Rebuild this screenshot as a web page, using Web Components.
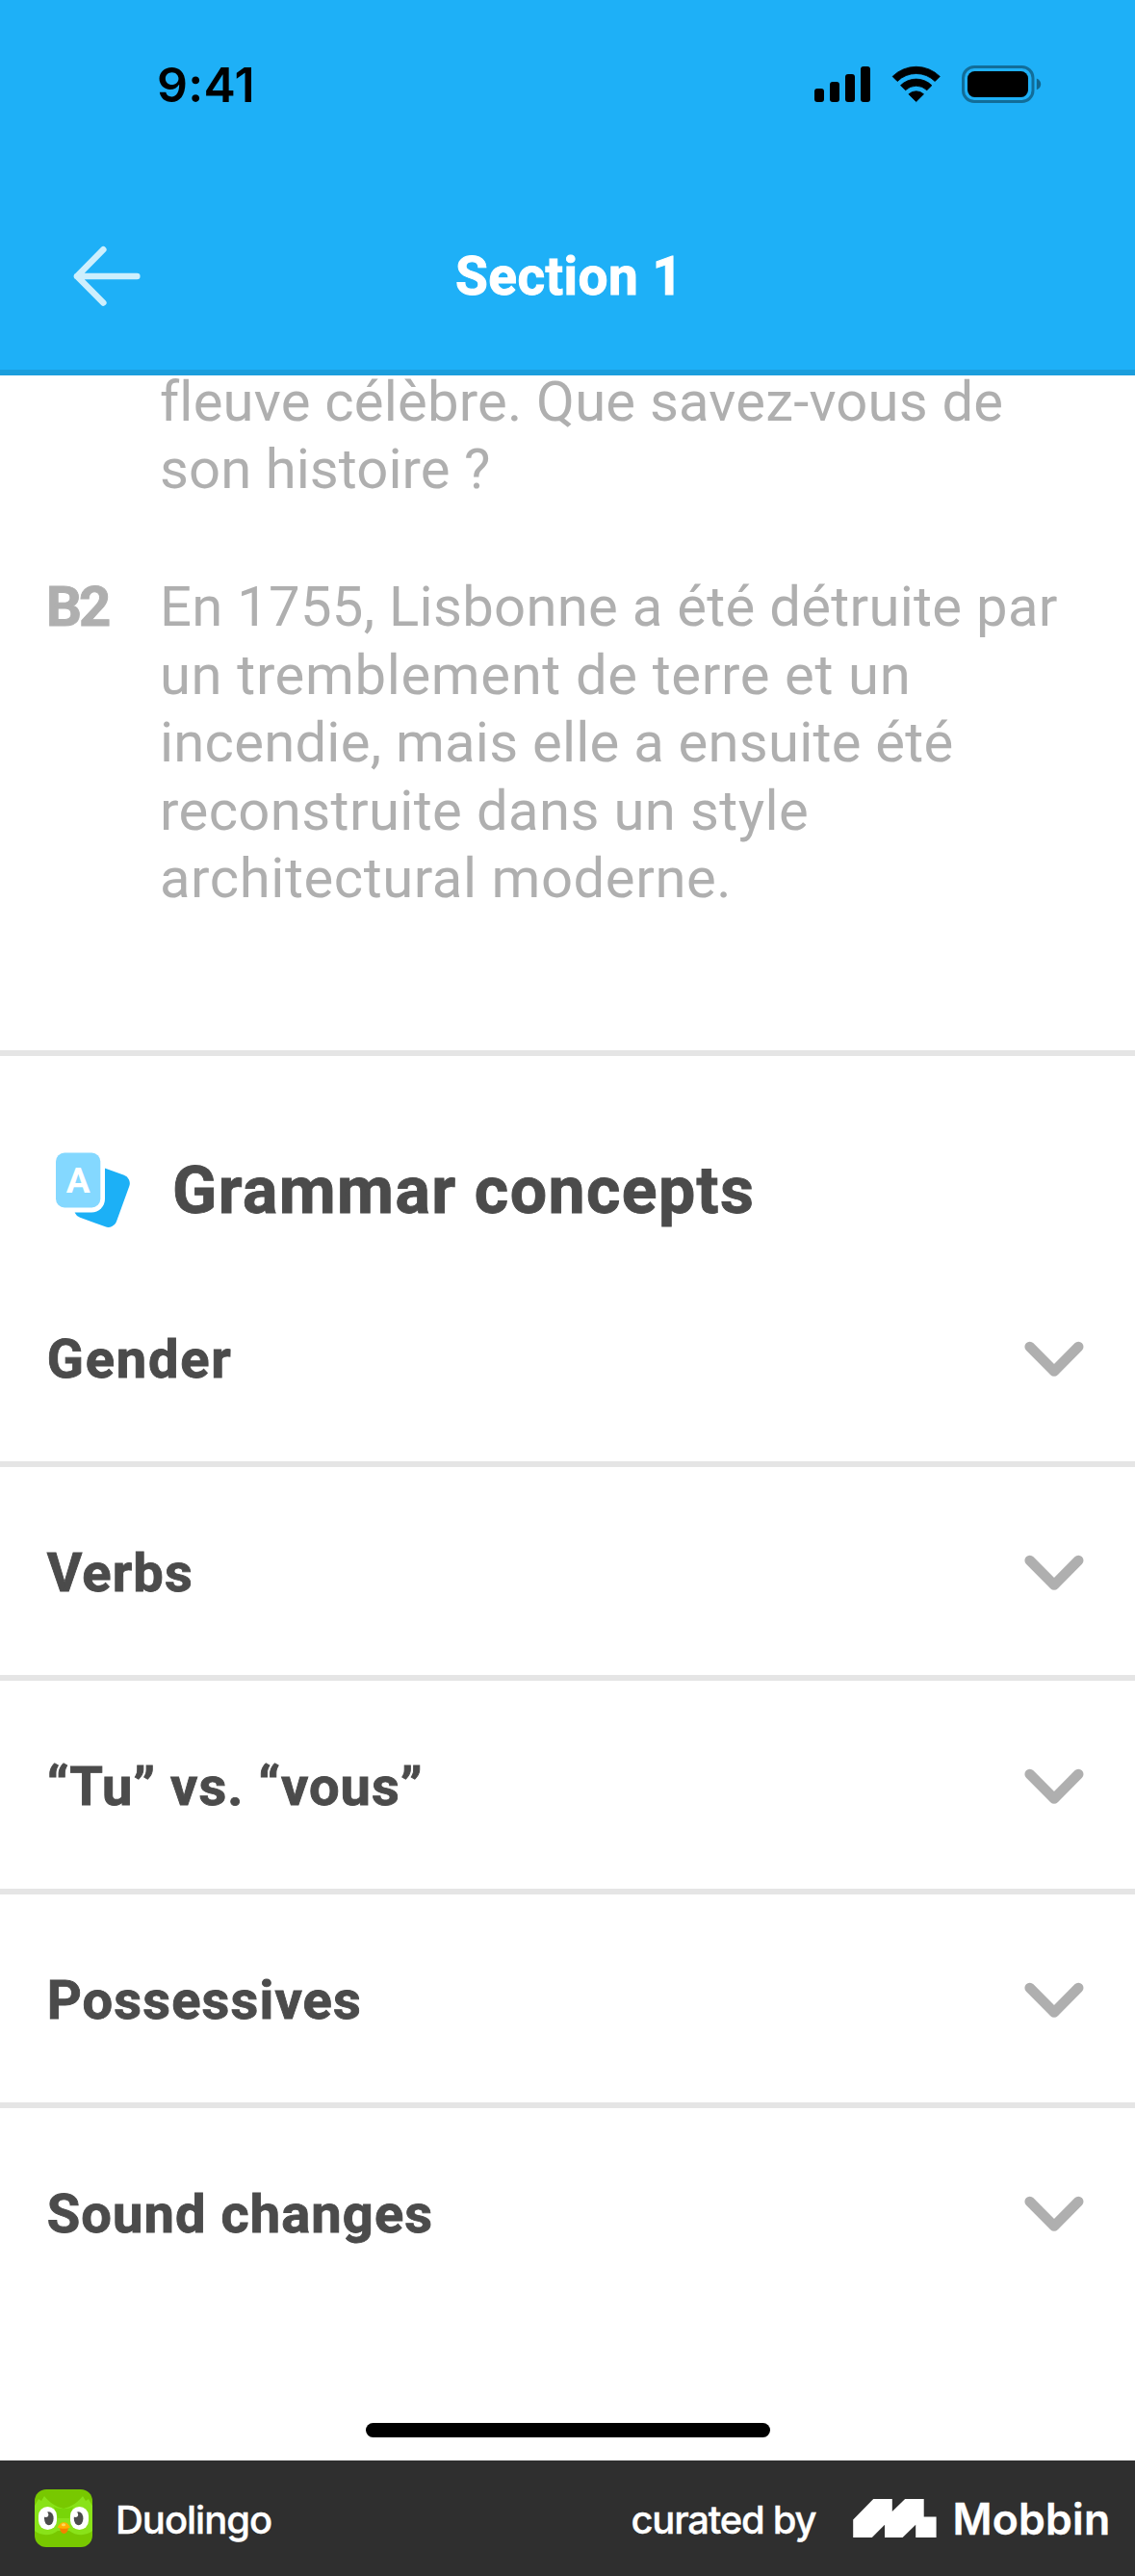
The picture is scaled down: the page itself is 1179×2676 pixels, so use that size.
<!DOCTYPE html>
<html lang="en">
<head>
<meta charset="utf-8">
<title>Section 1</title>
<style>
html,body{margin:0;padding:0;background:#fff}
body{width:1179px;height:2676px;overflow:hidden;font-family:Roboto,"Liberation Sans",sans-serif}
</style>
</head>
<body>
<guide-screen></guide-screen>
<script>
const define = (name, html, setup) => {
  const tpl = document.createElement('template');
  tpl.innerHTML = html;
  customElements.define(name, class extends HTMLElement {
    constructor() {
      super();
      this.attachShadow({ mode: 'open' }).append(tpl.content.cloneNode(true));
    }
    connectedCallback() { if (setup) setup(this); }
  });
};

define('status-bar', `
<style>
:host{display:flex;height:176px;align-items:center;justify-content:space-between;padding:0 96px 0 163px;box-sizing:border-box;color:#000;font:600 50px/60px Inter,sans-serif}
svg{display:block}
</style>
<fit-line width="98.5">9:41</fit-line>
<svg width="237" height="40" viewBox="846 68 237 40">
  <rect x="846" y="92" width="10" height="14" rx="3"/>
  <rect x="862" y="85" width="10" height="21" rx="3"/>
  <rect x="878" y="77" width="10" height="29" rx="3"/>
  <rect x="894" y="69" width="10" height="37" rx="3"/>
  <g stroke="#000" stroke-width=".8" stroke-linejoin="round">
    <path d="M927.1 79.4A35 35 0 0 1 976.3 79.4L971.2 84.5A27.7 27.7 0 0 0 932.2 84.5Z"/>
    <path d="M935.5 88.7A23.2 23.2 0 0 1 967.9 88.7L962.8 93.7A15.9 15.9 0 0 0 940.6 93.7Z"/>
    <path d="M943.9 97.8A11.5 11.5 0 0 1 959.5 97.8L951.7 105.6Z"/>
  </g>
  <rect x="1000.5" y="69.5" width="72.5" height="36" rx="11.5" fill="none" stroke="#000" stroke-opacity=".38" stroke-width="3"/>
  <rect x="1005" y="74" width="63" height="27" rx="7.5"/>
  <path d="M1076.8 81.6C1079.6 82.8 1081.2 84.9 1081.2 87.4S1079.6 92 1076.8 93.2Z" fill-opacity=".42"/>
</svg>`);

define('nav-bar', `
<style>
:host{display:grid;grid-template-columns:397px 1fr;align-items:center;height:208px;padding:14px 76px 0;box-sizing:border-box;color:#fff;font-weight:700;font-size:55px;line-height:66px;-webkit-text-stroke:.9px}
svg{display:block}
</style>
<svg width="70" height="64" viewBox="76 254 70 64" fill="none" stroke="#cdeffd" stroke-width="6.6" stroke-linecap="round" stroke-linejoin="round">
  <path d="M142.3 286H80M107.3 258.3L80 286L107.3 313.5"/>
</svg>
<slot></slot>`);

define('example-row', `
<style>
:host{display:grid;grid-template-columns:118px 1fr;padding-left:48px;color:#afafaf;font-size:58px;line-height:70.4px}
.level{font-weight:700;-webkit-text-stroke:1px}
</style>
<div class="level"><slot name="level"></slot></div><div><slot></slot></div>`);

define('section-heading', `
<style>
:host{display:flex;height:205px;padding:73px 0 0 58px;box-sizing:border-box;align-items:center;gap:41px;color:#4b4b4b;font-weight:700;font-size:68px;line-height:80px;-webkit-text-stroke:.9px}
svg{display:block;flex:none}
text{font:700 37px Roboto,sans-serif;-webkit-text-stroke:0}
div{padding-top:2px}
</style>
<svg width="80" height="80" viewBox="58 1196.5 80 80">
  <rect x="83" y="1214.8" width="46" height="57" rx="9" fill="#1cb0f6" transform="rotate(20 106 1243.3)"/>
  <path d="M53 1193H109V1246A14 14 0 0 1 95 1260H53Z" fill="#fff"/>
  <rect x="58" y="1198" width="46.3" height="57" rx="9" fill="#84d8ff"/>
  <text x="81.1" y="1239.2" text-anchor="middle" fill="#fff">A</text>
</svg><div><slot></slot></div>`);

define('concept-row', `
<style>
:host{display:flex;height:222px;padding:3px 53px 0 48.7px;box-sizing:border-box;align-items:center;justify-content:space-between;border-bottom:6px solid #e5e5e5;color:#4b4b4b;font-weight:700;font-size:56px;line-height:66px;-webkit-text-stroke:.9px}
:host([last]){border-bottom-color:transparent}
svg{display:block}
</style>
<slot></slot>
<svg width="62" height="38" viewBox="1064.3 1393 62 38" fill="none" stroke="#afafaf" stroke-width="10.6" stroke-linecap="round" stroke-linejoin="round"><path d="M1070 1399L1095.3 1424.5L1120.5 1399"/></svg>`);

define('owl-icon', `
<style>:host{display:block;width:60px;height:60px;border-radius:12px;overflow:hidden}svg{display:block}</style>
<svg width="60" height="60" viewBox="0 0 60 60">
  <rect width="60" height="60" fill="#78c800"/>
  <path d="M0 17L4 10L7 12L10 7C15 13 21 18 30 20C39 18 45 13 50 7L53 12L56 10L60 17V43C55 48 43 49 36 43H24C17 49 5 48 0 43Z" fill="#89e219"/>
  <path d="M20 18C26 21 34 21 40 18L36 30H24Z" fill="#78d508"/>
  <rect x="4" y="18" width="19" height="24" rx="9.5" fill="#fff"/>
  <rect x="37" y="18" width="19" height="24" rx="9.5" fill="#fff"/>
  <ellipse cx="14.8" cy="30.3" rx="4.8" ry="7" fill="#4b4b4b"/>
  <ellipse cx="45.6" cy="30.3" rx="4.8" ry="7" fill="#4b4b4b"/>
  <circle cx="11.6" cy="26.2" r="2.7" fill="#fff"/>
  <circle cx="42.4" cy="26.2" r="2.7" fill="#fff"/>
  <path d="M26 39H35C35 43 33 46 30.5 46S26 43 26 39Z" fill="#f48000"/>
  <path d="M23.7 39.5C25.5 36 27.5 34.3 30.3 34.3S35.3 36 37 39.5C34 41.2 27 41.2 23.7 39.5Z" fill="#ffb100"/>
  <ellipse cx="30" cy="36.8" rx="2.1" ry="1.5" fill="#ffd95c"/>
</svg>`);

define('credit-bar', `
<style>
:host{display:flex;height:120px;align-items:center;background:#2f2f2f;color:#fff;padding:0 28px 0 36px;box-sizing:border-box;font-family:Inter,sans-serif}
.app,.by{font-weight:500;font-size:40px;line-height:48px;padding-top:3px;-webkit-text-stroke:.4px}
.app{margin-left:24px}
.by{margin-left:auto}
.brand{font-weight:600;font-size:44.5px;line-height:54px;padding-top:1px;-webkit-text-stroke:.4px}
svg{display:block;margin:0 17px 0 37px}
</style>
<owl-icon></owl-icon>
<fit-line class="app" width="162">Duolingo</fit-line>
<fit-line class="by" width="193">curated by</fit-line>
<svg width="87" height="40" viewBox="886 2596 87 40" fill="#fff"><path d="M907.2 2596H926.8V2609L940.1 2596H959.7V2614.5H972.6V2636H951.2V2622.8L937.6 2636H919V2622.8L905.8 2636H886.2V2617.4Z"/></svg>
<fit-line class="brand" width="161.5">Mobbin</fit-line>`);

define('guide-screen', `
<style>
:host{display:flex;flex-direction:column;width:1179px;height:2676px;background:#fff}
header{background:#1eb0f7;height:384px;flex:none;border-bottom:6px solid #1b9edd}
main{flex:1;display:flex;flex-direction:column}
.examples{height:701px;flex:none;border-bottom:6px solid #e5e5e5;display:flex;flex-direction:column;gap:73px}
.first{line-height:54.4px;margin-bottom:7.6px}
.home{width:420px;height:15px;border-radius:8px;background:#000;margin:auto auto 24px;flex:none}
</style>
<header><status-bar></status-bar><nav-bar><fit-line width="226.5">Section 1</fit-line></nav-bar></header>
<main>
  <div class="examples">
    <example-row>
      <fit-line class="first" width="873">fleuve célèbre. Que savez-vous de</fit-line>
      <fit-line width="342">son histoire ?</fit-line>
    </example-row>
    <example-row>
      <fit-line slot="level" width="66">B2</fit-line>
      <fit-line width="931.7">En 1755, Lisbonne a été détruite par</fit-line>
      <fit-line width="776.7">un tremblement de terre et un</fit-line>
      <fit-line width="822.5">incendie, mais elle a ensuite été</fit-line>
      <fit-line width="672">reconstruite dans un style</fit-line>
      <fit-line width="589.3">architectural moderne.</fit-line>
    </example-row>
  </div>
  <section-heading><fit-line width="602">Grammar concepts</fit-line></section-heading>
  <concept-row><fit-line width="190.6">Gender</fit-line></concept-row>
  <concept-row><fit-line width="149.3">Verbs</fit-line></concept-row>
  <concept-row><fit-line width="388">“Tu” vs. “vous”</fit-line></concept-row>
  <concept-row><fit-line width="324.3">Possessives</fit-line></concept-row>
  <concept-row last><fit-line width="398.6">Sound changes</fit-line></concept-row>
  <div class="home"></div>
</main>
<credit-bar></credit-bar>`);

// One line of text, tracked so that its ink ends at the given width.
const pen = document.createElement('canvas').getContext('2d');
define('fit-line', `
<style>:host{display:block;white-space:nowrap;font-variant-ligatures:none}</style><slot></slot>`, el => {
  const cs = getComputedStyle(el), text = el.textContent, width = +el.getAttribute('width');
  pen.font = `${cs.fontWeight} ${cs.fontSize} ${cs.fontFamily}`;
  const ink = pen.measureText(text).actualBoundingBoxRight;
  el.style.width = width + 'px';
  el.style.letterSpacing = ((width - ink) / (text.length - 1)).toFixed(3) + 'px';
});
</script>
</body>
</html>
